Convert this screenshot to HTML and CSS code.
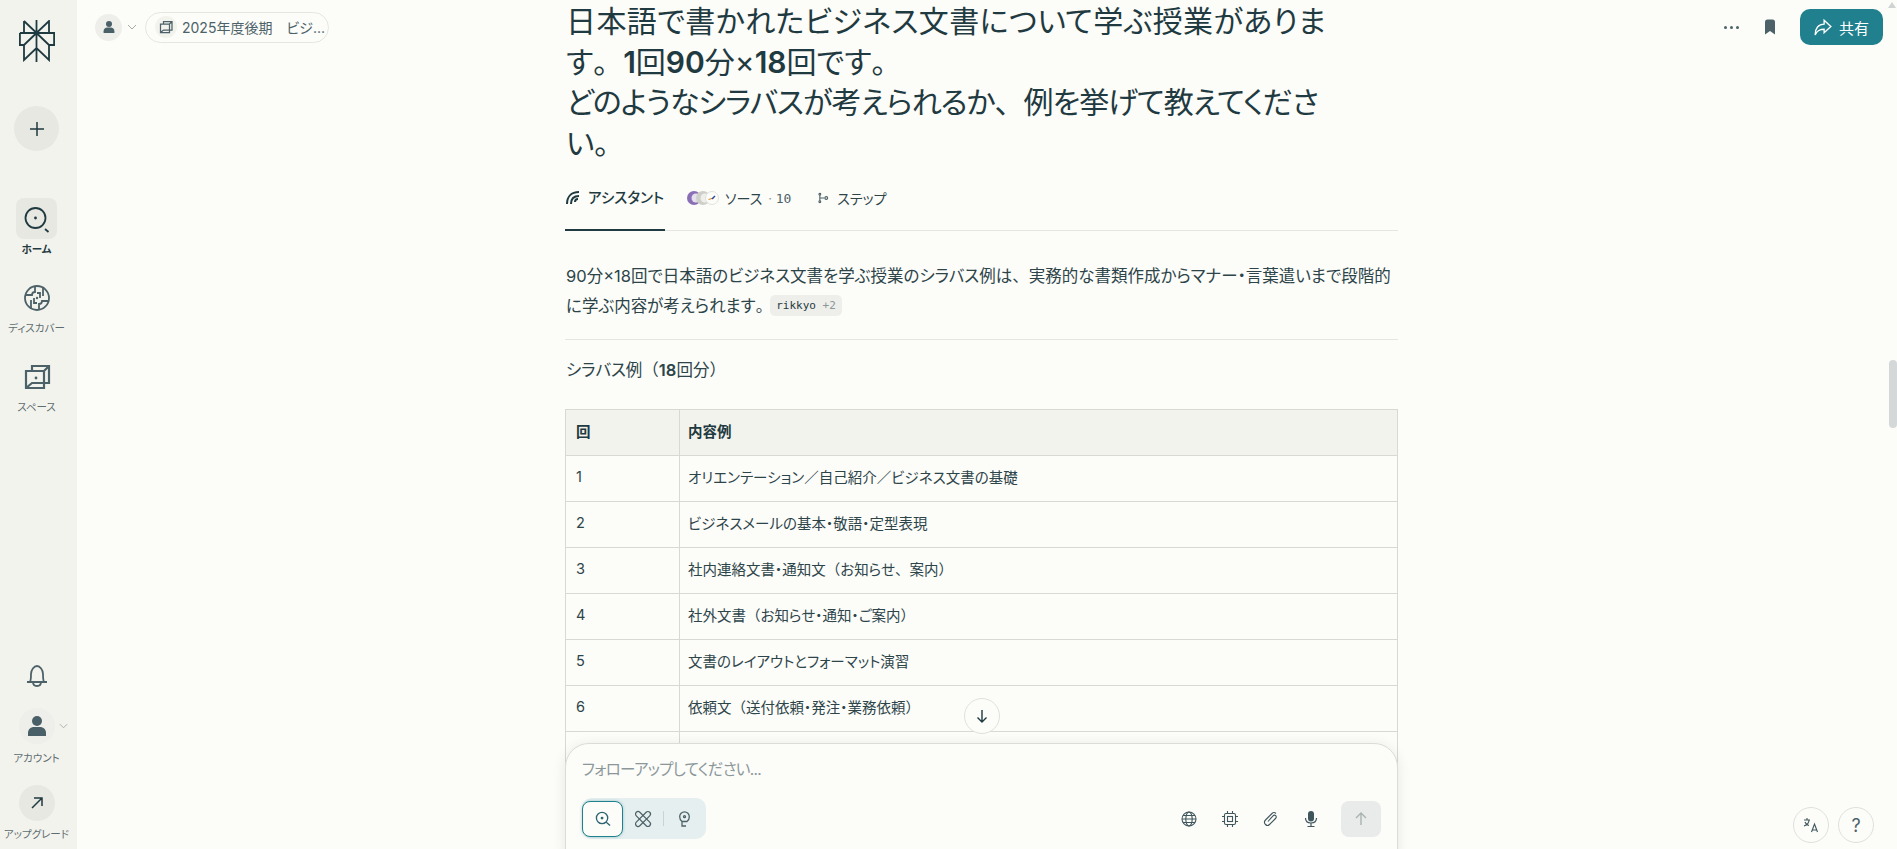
FILE: index.html

```html
<!DOCTYPE html>
<html lang="ja">
<head>
  <meta charset="UTF-8" />
  <title>Perplexity</title>
  <link rel="stylesheet" href="styles.css">
</head>
<body>
  <aside class="sidebar">
    <svg class="logo" viewBox="0 0 36 42" fill="none" stroke="#1f3a40" stroke-width="1.800">
      <path d="M17.500 0v42M5 1l12.500 12L30 1v12M5 1v12M.9 13h34.200v12H30M.9 13v12H5M17.500 13L5 25v15l12.500-12L30 40V25L17.500 13"/>
    </svg>
    <button class="new-btn">
      <svg width="18" height="18" viewBox="0 0 18 18" stroke="#1f3a40" stroke-width="1.500"><path d="M9 2v14M2 9h14"/></svg>
    </button>
    <nav class="nav">
      <div class="nav-item active">
        <div class="nav-icon">
          <svg width="28" height="28" viewBox="0 0 28 28" fill="none" stroke="#1f3a40" stroke-width="1.800"><circle cx="12.500" cy="13" r="10"/><circle cx="12.500" cy="13" r="1.400" fill="#1f3a40" stroke="none"/><path d="M22 24l3.500 3"/></svg>
        </div>
        <span>ホーム</span>
      </div>
      <div class="nav-item">
        <div class="nav-icon">
          <svg width="28" height="28" viewBox="0 0 28 28" fill="none" stroke="#4d6268" stroke-width="1.800"><circle cx="14" cy="14" r="12"/><path d="M2.500 11H9a3 3 0 0 1 3-3V2.500M25.500 17H19a3 3 0 0 1-3 3v5.500M8 25v-9M20 3v9M11 14v5h3M17 14V9h-3"/><circle cx="14" cy="14" r="1.200" fill="#4d6268" stroke="none"/></svg>
        </div>
        <span>ディスカバー</span>
      </div>
      <div class="nav-item">
        <div class="nav-icon">
          <svg width="28" height="28" viewBox="0 0 28 28" fill="none" stroke="#4d6268" stroke-width="2.200"><path d="M3 8h18v17H3zM9 8V3h17v17h-5M21 8l5-5M3 25l6-5h12"/><circle cx="13" cy="15" r="1.400" fill="#4d6268" stroke="none"/></svg>
        </div>
        <span>スペース</span>
      </div>
    </nav>
    <div class="side-bottom">
      <svg class="bell" width="22" height="24" viewBox="0 0 22 24" fill="none" stroke="#4d6268" stroke-width="1.800"><path d="M1 18h20M4 18c1-2 1-4 1-8 0-4 3-8 6-8s6 4 6 8c0 4 0 6 1 8M7 18c0 3 2 4 4 4s4-1 4-4"/></svg>
      <div class="account">
        <div class="avatar big">
          <svg width="20" height="22" viewBox="0 0 20 22" fill="#4a6068"><circle cx="10" cy="6" r="5"/><path d="M1 21v-3c0-4 3-6 6-6h6c3 0 6 2 6 6v3z"/></svg>
        </div>
        <svg class="chev side-chev" width="9" height="6" viewBox="0 0 10 6" fill="none" stroke="#a3aaa9"><path d="M1 1l4 4 4-4"/></svg>
      </div>
      <span class="side-label">アカウント</span>
      <div class="upgrade">
        <svg width="14" height="14" viewBox="0 0 14 14" fill="none" stroke="#1f3a40" stroke-width="1.500"><path d="M2 12L12 2M4 2h8v8"/></svg>
      </div>
      <span class="side-label">アップグレード</span>
    </div>
  </aside>

  <main class="main">
    <header class="topbar">
      <div class="top-left">
        <div class="avatar">
          <svg width="12" height="14" viewBox="0 0 20 22" fill="#4a6068"><circle cx="10" cy="6" r="5"/><path d="M1 21v-3c0-4 3-6 6-6h6c3 0 6 2 6 6v3z"/></svg>
        </div>
        <svg class="chev" width="10" height="6" viewBox="0 0 10 6" fill="none" stroke="#a3aaa9"><path d="M1 1l4 4 4-4"/></svg>
        <div class="crumb">
          <span class="crumb-icon">
            <svg width="14" height="14" viewBox="0 0 28 28" fill="none" stroke="#4d6268" stroke-width="2.500"><path d="M3 8h18v17H3zM9 8V3h17v17h-5M21 8l5-5M3 25l6-5h12"/></svg>
          </span>
          <span>2025年度後期　ビジ...</span>
        </div>
      </div>
      <div class="top-right">
        <span class="dots"><i></i><i></i><i></i></span>
        <svg width="12" height="16" viewBox="0 0 12 16" fill="#4d6268"><path d="M1 3a2.500 2.500 0 0 1 2.500-2.500h5A2.500 2.500 0 0 1 11 3v12.500L6 12l-5 3.500z"/></svg>
        <button class="share">
          <svg width="18" height="18" viewBox="0 0 16 16" fill="none" stroke="#fff" stroke-width="1.200"><path d="M9 2l6 5.500L9 13v-3C5 10 3 11 1 15c0-6 3-9.500 8-9.500z"/></svg>
          共有
        </button>
      </div>
    </header>

    <article class="thread">
      <h1 class="question"><span class="line-wide">日本語で書かれたビジネス文書について学ぶ授業がありま</span><br>す<span class="fw">。</span><span class="digits">1</span>回<span class="digits">90</span>分×<span class="digits">18</span>回です<span class="fw">。</span><br><span class="line-tight">どのようなシラバスが考えられるか<span class="fw">、</span>例を挙げて教えてくださ</span><br>い<span class="fw">。</span></h1>

      <div class="tabs">
        <div class="tab current">
          <svg width="16" height="16" viewBox="0 0 16 16" fill="none" stroke="#1f3a40" stroke-width="2"><path d="M2 15C2 8 6 3 14 3M6 15c0-5 3-8 8-8M10 13c0-2 1-3 3-3"/></svg>
          アシスタント
        </div>
        <div class="tab">
          <svg class="source-icons" width="32" height="14" viewBox="0 0 32 14">
            <circle cx="7" cy="7" r="7" fill="#8a6fb5"/><circle cx="9" cy="7" r="4.500" fill="#e6dff0"/>
            <circle cx="16" cy="7" r="7" fill="#cfcfca"/><circle cx="18" cy="7" r="4.500" fill="#efefeb"/>
            <circle cx="25" cy="7" r="6.500" fill="#fcfcf9" stroke="#e0e0dc"/><path d="M21.500 8.500l5-1.500" stroke="#e08a2c" stroke-width="1.300"/><path d="M25 8l3-3" stroke="#2b4aa8" stroke-width="1.500"/>
          </svg>
          ソース<span class="count">· <b>10</b></span>
        </div>
        <div class="tab steps">
          <svg width="11" height="12" viewBox="0 0 12 12" fill="none" stroke="#4d6268" stroke-width="1.200"><circle cx="2" cy="2" r="1"/><circle cx="2" cy="10" r="1"/><circle cx="9" cy="6" r="1.500"/><path d="M2 3v6M2 6h5"/></svg>
          ステップ
        </div>
      </div>

      <p class="lead">90分×18回で日本語のビジネス文書を学ぶ授業のシラバス例は<span class="fw">、</span>実務的な書類作成からマナー・言葉遣いまで段階的に学ぶ内容が考えられます<span class="fw">。</span><span class="cite">rikkyo <em>+2</em></span></p>
      <hr class="rule">
      <p class="section">シラバス例<span class="fw">（</span><span class="digits">18</span>回分<span class="fw">）</span></p>

      <table class="syllabus">
        <thead>
          <tr><th class="num">回</th><th>内容例</th></tr>
        </thead>
        <tbody>
          <tr><td>1</td><td>オリエンテーション<span class="fw">／</span>自己紹介<span class="fw">／</span>ビジネス文書の基礎</td></tr>
          <tr><td>2</td><td>ビジネスメールの基本・敬語・定型表現</td></tr>
          <tr><td>3</td><td>社内連絡文書・通知文<span class="fw">（</span>お知らせ<span class="fw">、</span>案内<span class="fw">）</span></td></tr>
          <tr><td>4</td><td>社外文書<span class="fw">（</span>お知らせ・通知・ご案内<span class="fw">）</span></td></tr>
          <tr><td>5</td><td>文書のレイアウトとフォーマット演習</td></tr>
          <tr><td>6</td><td>依頼文<span class="fw">（</span>送付依頼・発注・業務依頼<span class="fw">）</span></td></tr>
          <tr><td>7</td><td>&nbsp;</td></tr>
        </tbody>
      </table>
    </article>

    <button class="scroll-down">
      <svg width="14" height="14" viewBox="0 0 14 14" fill="none" stroke="#1f3a40" stroke-width="1.400"><path d="M7 1v12M2.500 8.500L7 13l4.500-4.500"/></svg>
    </button>

    <div class="composer">
      <div class="placeholder">フォローアップしてください...</div>
      <div class="composer-row">
        <div class="modes">
          <div class="mode selected">
            <svg width="16" height="16" viewBox="0 0 17 17" fill="none" stroke="#2d6470" stroke-width="1.400"><circle cx="7.500" cy="7.500" r="6"/><circle cx="7.500" cy="7.500" r=".8" fill="#2d6470"/><path d="M12 12l4 3.500"/></svg>
          </div>
          <div class="mode">
            <svg width="16" height="16" viewBox="0 0 16 16" fill="none" stroke="#4d6268" stroke-width="1.200"><rect x="5.500" y="-1.500" width="5" height="19" rx="2.500" transform="rotate(45 8 8)"/><rect x="5.500" y="-1.500" width="5" height="19" rx="2.500" transform="rotate(-45 8 8)"/></svg>
          </div>
          <span class="mode-sep"></span>
          <div class="mode">
            <svg width="11" height="16" viewBox="0 0 11 16" fill="none" stroke="#4d6268" stroke-width="1.300"><path d="M3 10.500C1.500 9.500.7 8 .7 5.700a4.800 4.800 0 0 1 9.600 0C10.300 8 9.500 9.500 8 10.500H3zM3 10.500V15h4"/><circle cx="5.500" cy="5.700" r="1"/></svg>
          </div>
        </div>
        <div class="tools">
          <svg width="16" height="16" viewBox="0 0 16 16" fill="none" stroke="#3f565c" stroke-width="1.100"><circle cx="8" cy="8" r="7"/><ellipse cx="8" cy="8" rx="3.200" ry="7"/><path d="M1 8h14M2 4.500h12M2 11.500h12"/></svg>
          <svg width="16" height="16" viewBox="0 0 16 16" fill="none" stroke="#3f565c" stroke-width="1.100"><rect x="2.500" y="2.500" width="11" height="11" rx="1.500"/><rect x="5.500" y="5.500" width="5" height="5"/><path d="M5.500 0v2.500M10.500 0v2.500M5.500 13.500V16M10.500 13.500V16M0 5.500h2.500M0 10.500h2.500M13.500 5.500H16M13.500 10.500H16"/></svg>
          <svg width="16" height="16" viewBox="0 0 16 16" fill="none" stroke="#3f565c" stroke-width="1.100"><path d="M13 2.500c-1.500-1.500-3-1-4 0L2.500 9c-1.500 1.500-1.500 3 0 4.500s3 1 4 0l6-6c1-1 1-2 .2-2.800s-1.800-.8-2.700.1L5 10.500"/></svg>
          <svg width="14" height="16" viewBox="0 0 14 16" fill="none" stroke="#3f565c" stroke-width="1.200"><rect x="4" y="0" width="6" height="10.500" rx="3" fill="#3f565c" stroke="none"/><path d="M1.500 7c0 3.500 2.500 5 5.500 5s5.500-1.500 5.500-5M7 12v3.500M3.500 15.500h7"/></svg>
          <div class="send">
            <svg width="14" height="14" viewBox="0 0 14 14" fill="none" stroke="#a9b3b2" stroke-width="1.400"><path d="M7 13V1M2 6l5-5 5 5"/></svg>
          </div>
        </div>
      </div>
    </div>

    <div class="corner-btns">
      <button class="round">
        <svg width="16" height="16" viewBox="0 0 16 16" fill="none" stroke="#3f565c" stroke-width="1.100"><path d="M1 3h6M4 1v2M6 3c0 2.500-2 5-5 6M2 5c.5 1.500 2 3 4 3.500M8.500 15l3-8 3 8M9.500 13h4"/></svg>
      </button>
      <button class="round help">?</button>
    </div>

    <div class="scrollbar"><span class="arrow"></span><span class="thumb"></span></div>
  </main>
</body>
</html>
```

FILE: styles.css

```css
* {
  box-sizing: border-box;
}
html, body {
  height: 100%;
}
body {
  margin: 0;
  display: flex;
  overflow: hidden;
  background-color: #fcfcf9;
  color: #1f3a40;
  font-family: Inter, "Noto Sans CJK JP", sans-serif;
  font-feature-settings: "palt";
}
button {
  font-family: inherit;
  border: none;
  padding: 0;
}
/* punctuation keeps its full width, digits run heavier than the kana */
.fw {
  font-feature-settings: normal;
}
.digits {
  font-weight: 600;
}

/* left rail */
.sidebar {
  width: 77px;
  flex-shrink: 0;
  height: 849px;
  padding-right: 4px;
  background-color: #f3f3ee;
  display: flex;
  flex-direction: column;
  align-items: center;
}
.logo {
  width: 36px;
  height: 42px;
  margin-top: 20px;
}
.new-btn {
  width: 45px;
  height: 45px;
  margin-top: 44px;
  border-radius: 50%;
  background-color: #e8e8e3;
  display: flex;
  align-items: center;
  justify-content: center;
}
.nav {
  margin-top: 47px;
  display: flex;
  flex-direction: column;
  gap: 21px;
  align-items: center;
}
.nav-item {
  display: flex;
  flex-direction: column;
  align-items: center;
  font-size: 10.500px;
  color: #5e6d70;
  width: 73px;
}
.nav-item.active {
  color: #1f3a40;
  font-weight: 700;
}
.nav-icon {
  width: 41px;
  height: 41px;
  border-radius: 8px;
  display: flex;
  align-items: center;
  justify-content: center;
  margin-bottom: 2px;
}
.active .nav-icon {
  background-color: #e8e8e3;
}
.side-bottom {
  margin-top: auto;
  padding-bottom: 7px;
  display: flex;
  flex-direction: column;
  align-items: center;
  width: 100%;
}
.bell {
  margin-bottom: 20px;
}
.account {
  position: relative;
  margin-bottom: 1px;
}
.side-chev {
  position: absolute;
  left: 35px;
  top: 15px;
}
.avatar {
  width: 27px;
  height: 27px;
  border-radius: 50%;
  background-color: #eeeeea;
  display: flex;
  align-items: center;
  justify-content: center;
}
.avatar.big {
  width: 36px;
  height: 36px;
}
.side-label {
  font-size: 10.500px;
  line-height: 14px;
  margin-top: 7px;
  color: #5e6d70;
  white-space: nowrap;
}
.upgrade {
  width: 36px;
  height: 36px;
  margin-top: 19px;
  border-radius: 50%;
  background-color: #e8e8e3;
  display: flex;
  align-items: center;
  justify-content: center;
}

/* main column */
.main {
  flex: 1;
  position: relative;
  height: 849px;
  overflow: hidden;
}
.topbar {
  position: absolute;
  top: 0;
  left: 0;
  right: 0;
  height: 54px;
  display: flex;
  justify-content: space-between;
  align-items: center;
  padding: 0 14px 0 18px;
}
.top-left, .top-right {
  display: flex;
  align-items: center;
}
.chev {
  margin-left: 5px;
}
.crumb {
  margin-left: 8px;
  width: 184px;
  height: 31px;
  border: 1px solid #e6e6e1;
  border-radius: 16px;
  display: flex;
  align-items: center;
  gap: 5px;
  padding-left: 9px;
  font-size: 14px;
  color: #4d6268;
  white-space: nowrap;
}
.crumb-icon {
  width: 22px;
  height: 22px;
  border-radius: 50%;
  background-color: #f3f3ee;
  display: flex;
  align-items: center;
  justify-content: center;
}
.top-right {
  gap: 25px;
}
.dots {
  display: flex;
  gap: 3px;
}
.dots i {
  width: 3px;
  height: 3px;
  border-radius: 50%;
  background-color: #4d6268;
}
.share {
  width: 83px;
  height: 36px;
  margin-left: -1px;
  border-radius: 10px;
  background-color: #20808d;
  color: #fff;
  font-size: 15px;
  display: flex;
  align-items: center;
  justify-content: center;
  gap: 7px;
}

.thread {
  width: 833px;
  margin-left: 488px;
}
.question {
  margin: 0;
  padding: 1px 40px 0 1px;
  font-size: 30px;
  line-height: 40.500px;
  font-weight: 400;
  color: #1f3a40;
}
.line-wide {
  letter-spacing: 0.4px;
}
.line-tight {
  letter-spacing: -1px;
}

.tabs {
  margin-top: 9px;
  height: 59px;
  display: flex;
  gap: 22px;
  border-bottom: 1px solid #e6e6e1;
  font-size: 14px;
}
.tab {
  display: flex;
  align-items: center;
  gap: 6px;
  height: 59px;
  padding-bottom: 8px;
  color: #2d4449;
}
.tab.current {
  width: 100px;
  font-size: 14.500px;
  font-weight: 500;
  gap: 7px;
  white-space: nowrap;
  color: #1f3a40;
  border-bottom: 2px solid #1f3a40;
}
.tab.steps {
  margin-left: 5px;
  gap: 8px;
}
.source-icons {
  display: block;
}
.count {
  color: #8b9799;
  font-size: 13px;
}
.count b {
  font-family: "DejaVu Sans Mono", monospace;
  font-weight: 400;
  color: #4d6268;
}

.lead {
  margin: 30px 0 0;
  padding-left: 1px;
  font-size: 16.500px;
  line-height: 30px;
  color: #2d4449;
}
.cite {
  display: inline-block;
  margin-left: -2px;
  padding: 0 6px;
  height: 21px;
  line-height: 21px;
  border-radius: 5px;
  background-color: #eeeeea;
  color: #1f3a40;
  font-family: "DejaVu Sans Mono", monospace;
  font-size: 11px;
  vertical-align: 3px;
}
.cite em {
  font-style: normal;
  color: #8b9799;
}
.rule {
  margin: 18px 0 0;
  border: none;
  border-top: 1px solid #e6e6e1;
}
.section {
  margin: 15px 0 0;
  padding-left: 1px;
  font-size: 16.500px;
  line-height: 30px;
  color: #2d4449;
}

.syllabus {
  width: 100%;
  margin-top: 24px;
  border-collapse: collapse;
  font-size: 14.500px;
  color: #2d4449;
}
.syllabus th, .syllabus td {
  height: 46px;
  padding: 0 8px 5px 10px;
  border: 1px solid #d9d9d4;
  text-align: left;
}
.syllabus th + th, .syllabus td + td {
  padding-left: 8px;
}
.syllabus th {
  background-color: #f3f3ee;
  font-weight: 700;
  color: #1f3a40;
}
.syllabus .num {
  width: 114px;
}

.scroll-down {
  position: absolute;
  left: 887px;
  top: 698px;
  width: 36px;
  height: 36px;
  border-radius: 50%;
  background-color: #fcfcf9;
  border: 1px solid #e0e0db;
  display: flex;
  align-items: center;
  justify-content: center;
}

.composer {
  position: absolute;
  left: 488px;
  top: 743px;
  width: 833px;
  height: 130px;
  background-color: #fcfcf9;
  border: 1px solid #dcdcd7;
  border-radius: 24px;
  box-shadow: 0 2px 14px rgba(0, 0, 0, 0.09);
  padding: 13px 16px;
}
.placeholder {
  font-size: 15.500px;
  letter-spacing: -0.7px;
  line-height: 26px;
  color: #8b9799;
}
.composer-row {
  margin-top: 15px;
  display: flex;
  justify-content: space-between;
  align-items: center;
}
.modes {
  display: flex;
  align-items: center;
  background-color: #e5efef;
  border-radius: 10px;
  height: 41px;
  width: 124px;
}
.mode {
  width: 40px;
  height: 36px;
  display: flex;
  align-items: center;
  justify-content: center;
}
.mode svg {
  overflow: visible;
}
.mode.selected {
  height: 36px;
  width: 41px;
  background-color: #fcfcf9;
  border: 1px solid #20808d;
  border-radius: 8px;
  box-shadow: 0 0 3px rgba(32, 128, 141, 0.4);
}
.mode-sep {
  width: 1px;
  height: 15px;
  background-color: #c9d3d3;
}
.tools {
  display: flex;
  align-items: center;
  gap: 25px;
}
.send {
  width: 40px;
  height: 36px;
  margin-left: -2px;
  border-radius: 8px;
  background-color: #e8ebe9;
  display: flex;
  align-items: center;
  justify-content: center;
}

.corner-btns {
  position: absolute;
  right: 23px;
  bottom: 6px;
  display: flex;
  gap: 9px;
}
.round {
  width: 36px;
  height: 36px;
  border-radius: 50%;
  background-color: #fcfcf9;
  border: 1px solid #e0e0db;
  display: flex;
  align-items: center;
  justify-content: center;
}
.help {
  font-size: 18px;
  color: #4d6268;
}

.scrollbar {
  position: absolute;
  top: 0;
  right: 0;
  width: 14px;
  height: 100%;
}
.arrow {
  position: absolute;
  top: 2px;
  left: 5px;
  border-left: 4px solid transparent;
  border-right: 4px solid transparent;
  border-bottom: 6px solid #d0d3d3;
}
.thumb {
  position: absolute;
  top: 360px;
  left: 6px;
  width: 8px;
  height: 68px;
  border-radius: 4px;
  background-color: #d5d8d8;
}
```
